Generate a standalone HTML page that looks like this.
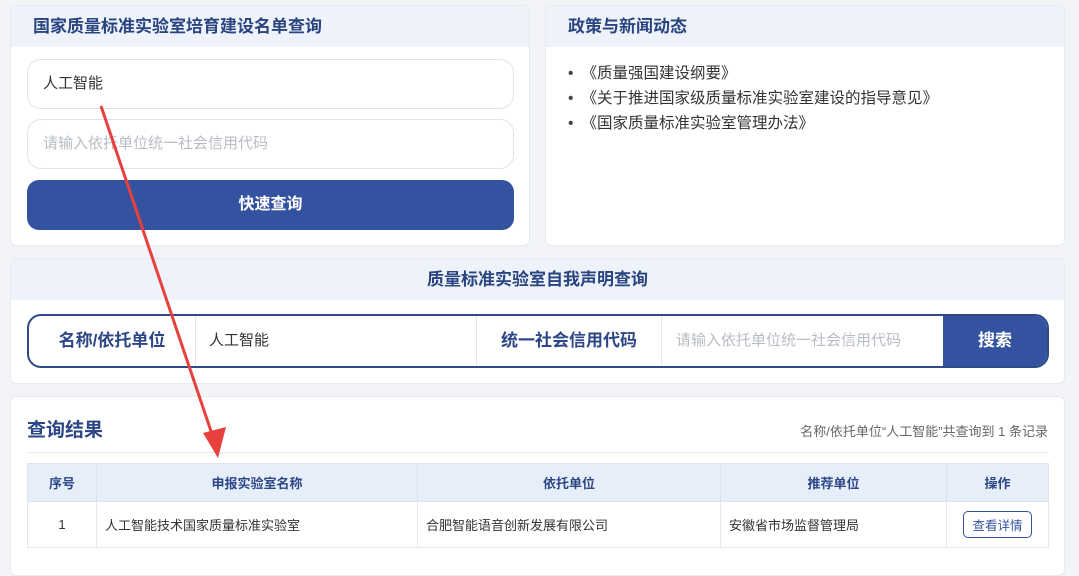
<!DOCTYPE html>
<html><head><meta charset="utf-8"><style>
*{box-sizing:border-box;margin:0;padding:0}
body{width:1079px;height:562px;overflow:hidden;background:#f2f4f8;font-family:"Liberation Sans","Noto Sans CJK SC",sans-serif;position:relative;color:#333}
.card{position:absolute;background:#fff;border:1px solid #e6eaf1;border-radius:6px;overflow:hidden}
.hd{height:41px;background:#eef3fb;font-weight:bold;font-size:17px;color:#2a4480;line-height:41px;padding-left:22px}
.inp{position:absolute;left:16px;width:487px;height:50px;border:1px solid #dfe3ea;border-radius:14px;font-size:15px;line-height:48px;padding-left:15px}
.btn{position:absolute;left:16px;width:487px;height:50px;background:#3352a0;border-radius:12px;color:#fff;font-weight:bold;font-size:16px;text-align:center;line-height:50px}
ul{position:absolute;left:22px;top:55px;list-style:none;font-size:15.5px;line-height:25px;color:#333}
ul li:before{content:"•";margin-right:8px;color:#444}
.sb{position:absolute;left:16px;top:55px;width:1022px;height:54px;border:2px solid #2d4a86;border-radius:14px;overflow:hidden;display:flex}
.sb div{height:100%;line-height:50px;font-size:15px}
.lb{font-weight:bold;color:#2c4686;font-size:17px!important;text-align:center}
table{position:absolute;left:16px;top:66px;width:1022px;border-collapse:collapse;font-size:13px}
th{background:#e6eefa;height:38px;font-weight:bold;color:#2c4686;border:1px solid #dde4ef}
td{height:46px;border:1px solid #e3e7ee;padding-left:8px;color:#333}
</style></head><body>
<div class="card" style="left:10px;top:5px;width:520px;height:241px">
<div class="hd">国家质量标准实验室培育建设名单查询</div>
<div class="inp" style="top:53px">人工智能</div>
<div class="inp" style="top:113px;color:#b8bcc4">请输入依托单位统一社会信用代码</div>
<div class="btn" style="top:174px">快速查询</div>
</div>
<div class="card" style="left:545px;top:5px;width:520px;height:241px">
<div class="hd">政策与新闻动态</div>
<ul><li>《质量强国建设纲要》</li><li>《关于推进国家级质量标准实验室建设的指导意见》</li><li>《国家质量标准实验室管理办法》</li></ul>
</div>
<div class="card" style="left:10px;top:258px;width:1055px;height:126px">
<div class="hd" style="padding:0;text-align:center">质量标准实验室自我声明查询</div>
<div class="sb">
<div class="lb" style="width:167px;border-right:1px solid #e3e7ee">名称/依托单位</div>
<div style="width:281px;padding-left:13px;border-right:1px solid #e3e7ee">人工智能</div>
<div class="lb" style="width:185px;border-right:1px solid #e3e7ee">统一社会信用代码</div>
<div style="width:281px;padding-left:14px;color:#b8bcc4">请输入依托单位统一社会信用代码</div>
<div style="flex:1;background:#3352a0;color:#fff;font-weight:bold;font-size:17px;text-align:center">搜索</div>
</div>
</div>
<div class="card" style="left:10px;top:396px;width:1055px;height:180px">
<div style="position:absolute;left:16px;top:18px;font-size:19px;font-weight:bold;color:#2c4686">查询结果</div>
<div style="position:absolute;right:16px;top:24px;font-size:13px;color:#666">名称/依托单位“人工智能”共查询到 1 条记录</div>
<div style="position:absolute;left:16px;right:16px;top:55px;border-top:1px solid #e3e7ee"></div>
<table><tr><th style="width:69px">序号</th><th style="width:321px">申报实验室名称</th><th style="width:303px">依托单位</th><th style="width:226px">推荐单位</th><th>操作</th></tr>
<tr><td style="text-align:center;padding:0">1</td><td>人工智能技术国家质量标准实验室</td><td>合肥智能语音创新发展有限公司</td><td>安徽省市场监督管理局</td><td style="text-align:center;padding:0"><span style="display:inline-block;border:1px solid #3352a0;border-radius:5px;color:#3352a0;padding:3px 8px;font-size:12.5px">查看详情</span></td></tr></table>
</div>
<svg style="position:absolute;left:0;top:0" width="1079" height="562"><line x1="101" y1="106" x2="214" y2="440" stroke="#e8403e" stroke-width="3"/><polygon points="218,458 203,433 226,427" fill="#e8403e"/></svg>
</body></html>
